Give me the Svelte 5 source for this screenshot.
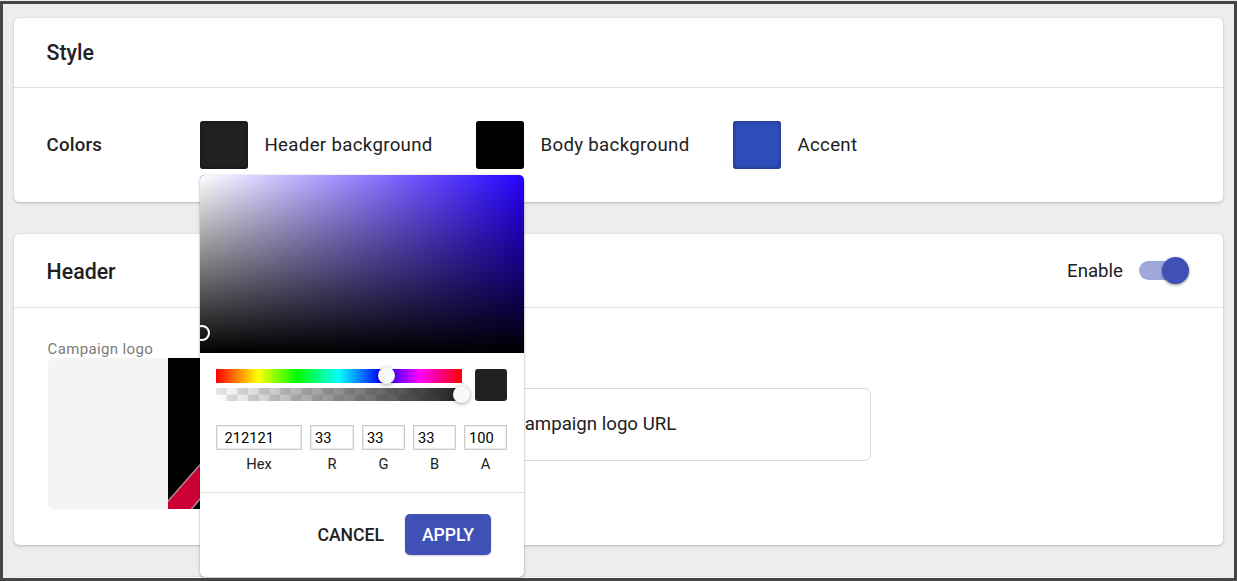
<script>
  let header = $state(true);
  let url = $state('');
  const fields = [
    { label: 'Hex', value: '212121', width: 86 },
    { label: 'R', value: '33', width: 44 },
    { label: 'G', value: '33', width: 43 },
    { label: 'B', value: '33', width: 43 },
    { label: 'A', value: '100', width: 43 }
  ];
</script>

<div class="frame">
  <section class="card style-card">
    <header><h2>Style</h2></header>
    <div class="colors">
      <h3>Colors</h3>
      <div class="color first">
        <button class="swatch dark" aria-label="Header background color"></button>
        <span>Header background</span>
        <div class="picker">
          <div class="field"><i class="pointer"></i></div>
          <div class="controls">
            <div class="sliders">
              <div class="hue"><i class="thumb"></i></div>
              <div class="alpha"><i class="thumb"></i></div>
            </div>
            <div class="preview"></div>
          </div>
          <div class="values">
            {#each fields as f}
              <label style:width="{f.width}px">
                <input value={f.value} class:hex={f.label === 'Hex'} />
                <span>{f.label}</span>
              </label>
            {/each}
          </div>
          <footer>
            <button class="cancel">CANCEL</button>
            <button class="apply">APPLY</button>
          </footer>
        </div>
      </div>
      <div class="color second">
        <button class="swatch black" aria-label="Body background color"></button>
        <span>Body background</span>
      </div>
      <div class="color">
        <button class="swatch accent" aria-label="Accent color"></button>
        <span>Accent</span>
      </div>
    </div>
  </section>

  <section class="card header-card">
    <header>
      <h2>Header</h2>
      <div class="enable">
        <span>Enable</span>
        <button class="toggle" class:on={header} aria-label="Enable header" onclick={() => (header = !header)}><i></i></button>
      </div>
    </header>
    <div class="content">
      <div class="logo">
        <div class="caption">Campaign logo</div>
        <div class="image">
          <svg width="150" height="151" viewBox="0 0 150 151">
            <defs>
              <filter id="soft"><feGaussianBlur stdDeviation="0.7" /></filter>
            </defs>
            <rect width="150" height="151" fill="#000" />
            <g filter="url(#soft)">
              <path d="M-13 158 L84 47.5 L110 49 L15 161 Z" fill="#cc0033" />
              <path d="M-13 158 L84 47.5 M110 49 L15 161" stroke="#b08a92" stroke-width="1.6" />
            </g>
          </svg>
        </div>
      </div>
      <input class="url" placeholder="Campaign logo URL" bind:value={url} />
    </div>
  </section>

  <section class="card next"></section>
</div>

<style>
  :global(body) { background: #ededed; overflow: hidden; }
  * { box-sizing: border-box; }
  button, input { font: inherit; color: inherit; margin: 0; }
  button { border: 0; padding: 0; background: none; }
  h2, h3 { margin: 0; font-weight: 500; }
  .frame {
    width: 1237px; height: 580px; margin-top: 1px; padding: 14px 11px 0;
    border: 3px solid #444; background: #ededed; overflow: hidden;
    font-family: Roboto, sans-serif; font-size: 18.67px; color: #212121;
    display: flex; flex-direction: column;
  }
  .card {
    flex: none; width: 1209px; background: #fff; border-radius: 5px;
    box-shadow: 0 1px 3px rgba(0,0,0,.22), 0 0 1px rgba(0,0,0,.15);
  }
  .card header {
    display: flex; align-items: center; justify-content: space-between;
    padding: 0 34px 0 32.6px; border-bottom: 1px solid #e0e0e0;
  }
  h2 { font-size: 21.33px; line-height: 28px; }
  .style-card { height: 184px; margin-bottom: 32px; }
  .style-card header { height: 70px; }
  .colors { height: 114px; display: flex; align-items: center; padding-left: 32.6px; }
  h3 { width: 153.4px; font-size: 18.67px; letter-spacing: .2px; }
  .color { position: relative; display: flex; align-items: center; gap: 16.5px; letter-spacing: .32px; }
  .first { width: 276px; }
  .second { width: 257px; }
  .swatch { width: 48px; height: 48px; border-radius: 3px; box-shadow: inset 0 0 4px rgba(0,0,0,.4); }
  .dark { background: #212121; }
  .black { background: #000; }
  .accent { background: #2e4cba; }
  .header-card { height: 311px; margin-bottom: 32px; }
  .header-card header { height: 74px; }
  .header-card h2 { padding-top: 2px; }
  .enable { display: flex; align-items: center; gap: 16px; letter-spacing: 0; }
  .toggle { width: 50px; height: 27px; display: flex; align-items: center; }
  .toggle::before { content: ''; width: 47px; height: 19px; border-radius: 10px; background: #9fa8da; }
  .toggle i { width: 27px; height: 27px; margin-left: -24px; border-radius: 50%; background: #3f51b5; box-shadow: 0 1px 3px rgba(0,0,0,.45); }
  .toggle:not(.on) i { margin-left: -47px; }
  .content { display: flex; padding: 32px 34px 0; }
  .logo { width: 423px; }
  .caption { font-size: 15px; line-height: 18px; letter-spacing: .35px; margin-left: -.4px; color: #7b7b7b; }
  .image { width: 390px; height: 151px; display: flex; justify-content: flex-start; padding-left: 120px; background: #f4f4f4; border-radius: 5px; overflow: hidden; }
  .image svg { display: block; }
  .url { width: 400px; height: 73px; margin-top: 48px; padding: 0 26px 2px 40.5px; border: 1px solid #dadada; border-radius: 6px; background: #fff; outline: none; }
  .url::placeholder { color: #212121; opacity: 1; }
  .next { height: 20px; }

  .picker {
    position: absolute; z-index: 5; left: 0; top: 54px; width: 324px; height: 402px;
    background: #fff; border-radius: 5px; overflow: hidden; letter-spacing: normal;
    box-shadow: 0 1px 3px rgba(0,0,0,.3), 0 0 1px rgba(0,0,0,.2);
  }
  .field {
    position: relative; height: 178px; overflow: hidden;
    background: linear-gradient(to top, #000, transparent), linear-gradient(to right, #fff, transparent), #2600ff;
  }
  .pointer { position: absolute; left: -6px; top: 150px; width: 16px; height: 16px; border: 2px solid #fff; border-radius: 50%; }
  .controls { display: flex; gap: 13px; padding: 16px 16px 0; }
  .sliders { width: 246px; display: flex; flex-direction: column; gap: 5px; }
  .hue, .alpha { position: relative; }
  .hue { height: 14px; background: linear-gradient(to right, #f00, #ff0 17%, #0f0 33%, #0ff 50%, #00f 67%, #f0f 83%, #f00); }
  .alpha {
    height: 13px;
    background: linear-gradient(to right, rgba(33,33,33,0), #212121),
      repeating-conic-gradient(#fff 0 25%, #e4e4e4 0 50%) 0 -4px / 21.4px 21.4px;
  }
  .thumb { position: absolute; left: 162px; top: -2px; width: 17px; height: 17px; border-radius: 50%; background: #f8f8f8; box-shadow: 0 1px 4px rgba(0,0,0,.37); }
  .alpha .thumb { left: 237.5px; top: -2px; }
  .preview { width: 32px; height: 32px; border-radius: 3px; background: #212121; }
  .values { display: flex; justify-content: space-between; width: 291px; margin: 24px 16px 0; }
  .values label { display: flex; flex-direction: column; align-items: center; font-size: 14.67px; }
  .values input { width: 100%; height: 25px; padding: 0 4px; border: 1px solid #ccc; box-shadow: inset 0 0 0 1px #eee; background: #fff; color: #000; outline: none; }
  .values .hex { padding-left: 7.5px; }
  .values span { line-height: 18px; margin-top: 5px; }
  footer { height: 85px; margin-top: 19px; padding: 0 33px 1px 0; border-top: 1px solid #e0e0e0; display: flex; justify-content: flex-end; align-items: center; font-weight: 500; font-size: 17.6px; }
  .cancel { margin-right: 21px; padding-top: 1px; }
  .apply { width: 86px; height: 41px; padding-top: 1px; border-radius: 5px; background: #3f51b5; color: #fff; box-shadow: 0 1px 2px rgba(0,0,0,.2); }
</style>
